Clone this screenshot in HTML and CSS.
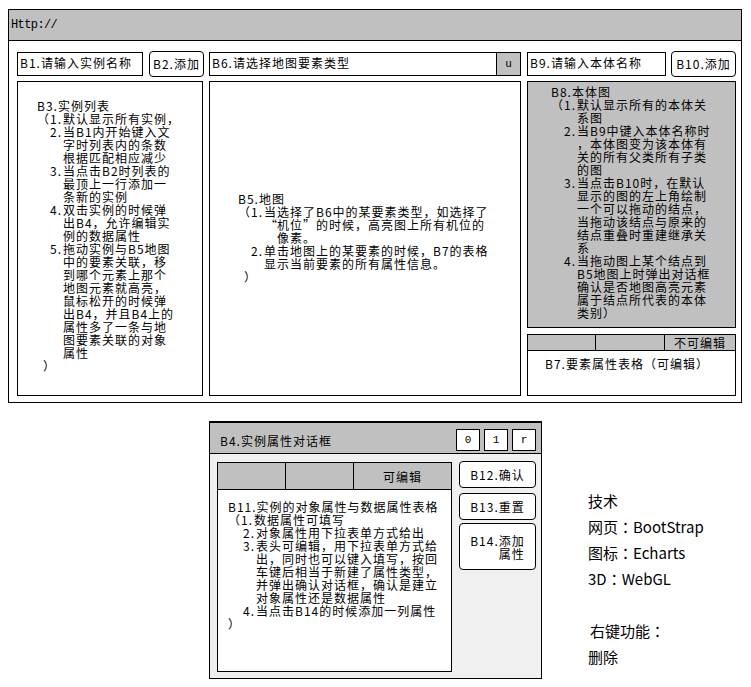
FILE: index.html
```html
<!DOCTYPE html>
<html lang="zh-CN">
<head>
<meta charset="utf-8">
<title>原型</title>
<link rel="stylesheet" href="styles.css">
</head>
<body>
<div class="app">
  <div class="hdr">Http://</div>
  <div class="main">
    <div class="toolbar">
      <div class="inp w-b1">B1.请输入实例名称</div>
      <div class="btn w-b2">B2.添加</div>
      <div class="inp sel w-b6"><span class="sel-text">B6.请选择地图要素类型</span><span class="sel-arrow">u</span></div>
      <div class="inp w-b9">B9.请输入本体名称</div>
      <div class="btn w-b10">B10.添加</div>
    </div>
    <div class="panels">
      <div class="panel p-b3">
        <div class="ln">B3.实例列表</div>
        <div class="ln">（<span class="n">1.</span>默认显示所有实例，</div>
        <div class="ln in1"><span class="n">2.</span>当B1内开始键入文</div>
        <div class="ln in2">字时列表内的条数</div>
        <div class="ln in2">根据匹配相应减少</div>
        <div class="ln in1"><span class="n">3.</span>当点击B2时列表的</div>
        <div class="ln in2">最顶上一行添加一</div>
        <div class="ln in2">条新的实例</div>
        <div class="ln in1"><span class="n">4.</span>双击实例的时候弹</div>
        <div class="ln in2">出B4，允许编辑实</div>
        <div class="ln in2">例的数据属性</div>
        <div class="ln in1"><span class="n">5.</span>拖动实例与B5地图</div>
        <div class="ln in2">中的要素关联，移</div>
        <div class="ln in2">到哪个元素上那个</div>
        <div class="ln in2">地图元素就高亮，</div>
        <div class="ln in2">鼠标松开的时候弹</div>
        <div class="ln in2">出B4，并且B4上的</div>
        <div class="ln in2">属性多了一条与地</div>
        <div class="ln in2">图要素关联的对象</div>
        <div class="ln in2">属性</div>
        <div class="ln cl">）</div>
      </div>
      <div class="panel p-b5">
        <div class="ln">B5.地图</div>
        <div class="ln">（<span class="n">1.</span>当选择了B6中的某要素类型，如选择了</div>
        <div class="ln in2"><span class="q qo">“</span>机位<span class="q qc">”</span>的时候，高亮图上所有机位的</div>
        <div class="ln in3">像素。</div>
        <div class="ln in1"><span class="n">2.</span>单击地图上的某要素的时候，B7的表格</div>
        <div class="ln in2">显示当前要素的所有属性信息。</div>
        <div class="ln cl">）</div>
      </div>
      <div class="rcol">
        <div class="panel p-b8">
          <div class="ln">B8.本体图</div>
          <div class="ln">（<span class="n">1.</span>默认显示所有的本体关</div>
          <div class="ln in2">系图</div>
          <div class="ln in1"><span class="n">2.</span>当B9中键入本体名称时</div>
          <div class="ln in2">，本体图变为该本体有</div>
          <div class="ln in2">关的所有父类所有子类</div>
          <div class="ln in2">的图</div>
          <div class="ln in1"><span class="n">3.</span>当点击B10时，在默认</div>
          <div class="ln in2">显示的图的左上角绘制</div>
          <div class="ln in2">一个可以拖动的结点，</div>
          <div class="ln in2">当拖动该结点与原来的</div>
          <div class="ln in2">结点重叠时重建继承关</div>
          <div class="ln in2">系</div>
          <div class="ln in1"><span class="n">4.</span>当拖动图上某个结点到</div>
          <div class="ln in2">B5地图上时弹出对话框</div>
          <div class="ln in2">确认是否地图高亮元素</div>
          <div class="ln in2">属于结点所代表的本体</div>
          <div class="ln in2">类别）</div>
        </div>
        <div class="tbl tbl-b7">
          <div class="thead">
            <div class="th c1"></div>
            <div class="th c2"></div>
            <div class="th c3">不可编辑</div>
          </div>
          <div class="tbody">
            <div class="ln">B7.要素属性表格（可编辑）</div>
          </div>
        </div>
      </div>
    </div>
  </div>
</div>

<div class="bottom">
  <div class="dlg">
    <div class="dlg-hd">
      <div class="dlg-title">B4.实例属性对话框</div>
      <div class="win-btns">
        <div class="wb">0</div>
        <div class="wb">1</div>
        <div class="wb">r</div>
      </div>
    </div>
    <div class="dlg-body">
      <div class="tbl tbl-b11">
        <div class="thead">
          <div class="th c1"></div>
          <div class="th c2"></div>
          <div class="th c3">可编辑</div>
        </div>
        <div class="tbody">
          <div class="ln">B11.实例的对象属性与数据属性表格</div>
          <div class="ln">（<span class="n">1.</span>数据属性可填写</div>
          <div class="ln in1"><span class="n">2.</span>对象属性用下拉表单方式给出</div>
          <div class="ln in1"><span class="n">3.</span>表头可编辑，用下拉表单方式给</div>
          <div class="ln in2">出，同时也可以键入填写，按回</div>
          <div class="ln in2">车键后相当于新建了属性类型，</div>
          <div class="ln in2">并弹出确认对话框，确认是建立</div>
          <div class="ln in2">对象属性还是数据属性</div>
          <div class="ln in1"><span class="n">4.</span>当点击B14的时候添加一列属性</div>
          <div class="ln cl">）</div>
        </div>
      </div>
      <div class="dlg-btns">
        <div class="btn b-short">B12.确认</div>
        <div class="btn b-short">B13.重置</div>
        <div class="btn b-tall"><span>B14.</span><span class="stack"><span>添加</span><span>属性</span></span></div>
      </div>
    </div>
  </div>
  <div class="notes">
    <div class="note">技术</div>
    <div class="note">网页<span class="colon">：</span>BootStrap</div>
    <div class="note">图标<span class="colon">：</span>Echarts</div>
    <div class="note">3D<span class="colon">：</span>WebGL</div>
    <div class="note"></div>
    <div class="note rk">右键功能<span class="colon">：</span></div>
    <div class="note">删除</div>
  </div>
</div>
</body>
</html>
```

FILE: styles.css
```css
* { box-sizing: border-box; }

body {
  margin: 0;
  padding: 9px 0 0 8px;
  background: #fff;
  color: #000;
  font-family: "Noto Sans CJK SC", sans-serif;
  font-size: 12px;
  letter-spacing: 1px;
  line-height: 13px;
}

.app {
  width: 734px;
  height: 394px;
  border: 1px solid #000;
  display: flex;
  flex-direction: column;
}

.hdr {
  flex: none;
  height: 31px;
  background: #c0c0c0;
  border-bottom: 1px solid #000;
  display: flex;
  align-items: center;
  padding-left: 2px;
  font-family: "Liberation Mono", monospace;
  font-size: 12px;
  letter-spacing: -0.6px;
}

.main {
  padding: 10px 0 0 8px;
}

.toolbar {
  display: flex;
  align-items: center;
  height: 26px;
}

.inp {
  height: 24px;
  border: 1px solid #000;
  background: #fff;
  padding: 3px 0 0 2px;
  white-space: nowrap;
}

.btn {
  border: 1px solid #000;
  border-radius: 4px;
  background: #fff;
  display: flex;
  align-items: center;
  justify-content: center;
  white-space: nowrap;
}

.toolbar .btn { height: 26px; padding-bottom: 2px; }

.w-b1 { width: 126px; }
.w-b2 { width: 55px; margin-left: 6px; }
.w-b6 { width: 312px; margin-left: 5px; }
.w-b9 { width: 139px; margin-left: 6px; }
.w-b10 { width: 65px; margin-left: 5px; }

.sel {
  display: flex;
  padding: 0;
}
.sel-text { flex: 1; padding: 3px 0 0 2px; }
.sel-arrow {
  width: 24px;
  border-left: 1px solid #000;
  background: #c0c0c0;
  display: flex;
  align-items: center;
  justify-content: center;
  font-family: "Liberation Mono", monospace;
  font-size: 11px;
  letter-spacing: 0;
}

.panels {
  display: grid;
  grid-template-columns: 186px 312px 209px;
  column-gap: 6px;
  margin-top: 4px;
  height: 315px;
}

.panel {
  border: 1px solid #000;
  background: #fff;
}

.ln { white-space: nowrap; height: 13px; }
.n { display: inline-block; width: 13px; }
.q { display: inline-block; width: 13px; letter-spacing: 0; }
.qo { text-align: right; }
.qc { text-align: left; }
.in1 { margin-left: 13px; }
.in2 { margin-left: 26px; }
.in3 { margin-left: 39px; }
.cl { margin-left: 6px; }

.p-b3 { padding: 17px 0 0 19px; }
.p-b5 { padding: 110px 0 0 28px; }

.rcol {
  display: flex;
  flex-direction: column;
  gap: 6px;
}

.p-b8 {
  height: 247px;
  flex: none;
  background: #c0c0c0;
  padding: 3px 0 0 23px;
}

.tbl {
  border: 1px solid #000;
  background: #fff;
  display: flex;
  flex-direction: column;
}

.thead {
  display: flex;
  flex: none;
  background: #c0c0c0;
  border-bottom: 1px solid #000;
}
.th { border-right: 1px solid #000; }
.th.c3 { flex: 1; border-right: none; text-align: center; }

.tbl-b7 { flex: 1; }
.tbl-b7 .thead { height: 16px; }
.tbl-b7 .th { line-height: 15px; }
.tbl-b7 .c1 { width: 68px; }
.tbl-b7 .c2 { width: 69px; }
.tbl-b7 .tbody { padding: 6px 0 0 17px; }

/* bottom area */
.bottom {
  display: flex;
  align-items: flex-start;
  margin: 18px 0 0 201px;
}

.dlg {
  width: 333px;
  height: 258px;
  border: 1px solid #000;
  border-top-width: 2px;
  display: flex;
  flex-direction: column;
  background: #f0f0f0;
}

.dlg-hd {
  flex: none;
  height: 31px;
  background: #c0c0c0;
  border-bottom: 1px solid #000;
  display: flex;
  justify-content: space-between;
  padding: 0 5px 2px 10px;
}
.dlg-title { align-self: center; padding-top: 6px; }

.win-btns {
  align-self: flex-end;
  display: flex;
  gap: 4px;
}
.wb {
  width: 24px;
  height: 22px;
  border: 1px solid #000;
  background: #fff;
  display: flex;
  align-items: center;
  justify-content: center;
  font-family: "Liberation Mono", monospace;
  font-size: 11px;
  letter-spacing: 0;
}

.dlg-body {
  flex: 1;
  display: flex;
  align-items: flex-start;
  padding: 8px 5px 0 7px;
}

.tbl-b11 { width: 235px; height: 210px; }
.tbl-b11 .thead { height: 27px; }
.tbl-b11 .th { display: flex; align-items: center; justify-content: center; }
.tbl-b11 .c1 { width: 68px; }
.tbl-b11 .c2 { width: 68px; }
.tbl-b11 .tbody { padding: 10px 0 0 10px; }
.tbl-b11 .in1 { margin-left: 15px; }
.tbl-b11 .in2 { margin-left: 28px; }
.tbl-b11 .cl { margin-left: 0; }

.dlg-btns {
  width: 77px;
  margin: -1px 0 0 7px;
  display: flex;
  flex-direction: column;
}
.b-short { height: 27px; }
.b-short + .b-short { margin-top: 5px; }
.b-tall {
  height: 47px;
  margin-top: 3px;
  align-items: flex-start;
  padding-top: 10px;
}
.stack { display: flex; flex-direction: column; }

.notes {
  margin: 67px 0 0 46px;
  font-size: 15px;
  line-height: 26px;
  letter-spacing: 0;
}
.note { height: 26px; white-space: nowrap; }
.colon {
  display: inline-block;
  width: 15px;
  text-align: center;
  font-family: "Noto Sans CJK TC", sans-serif;
}
.rk { padding-left: 2px; }
```
